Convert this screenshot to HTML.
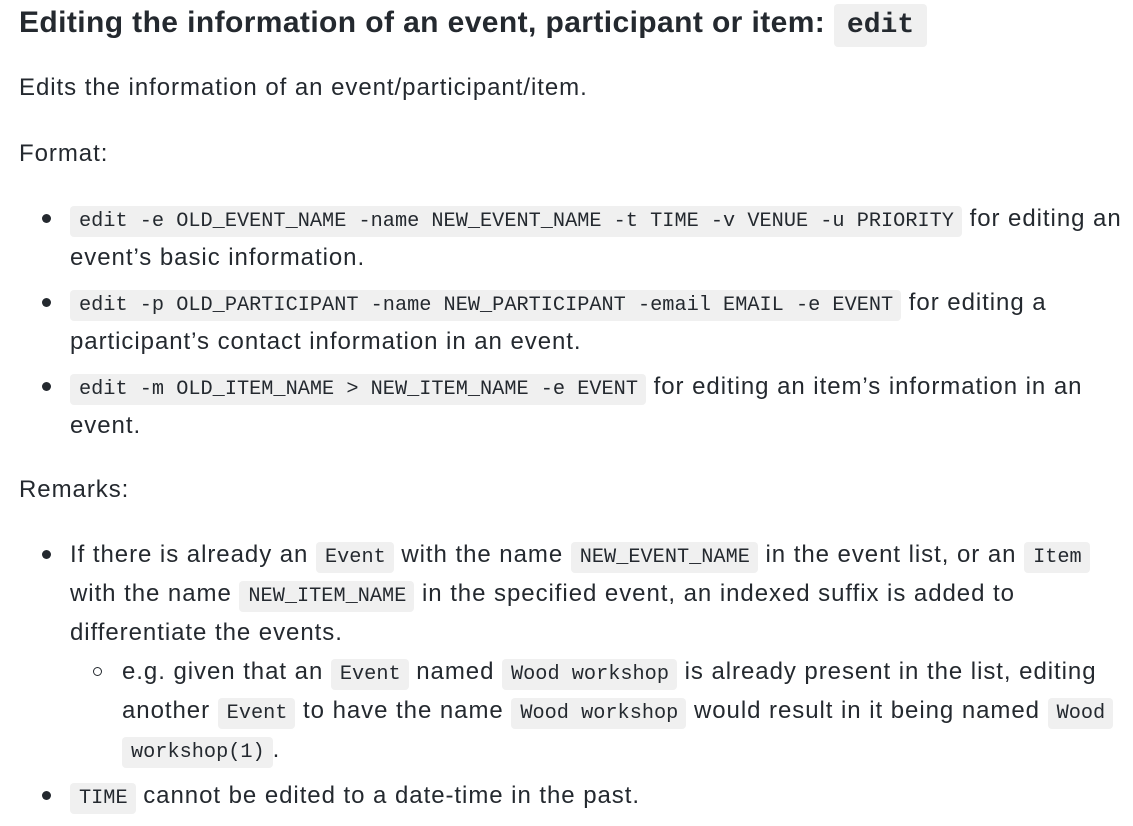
<!DOCTYPE html>
<html><head><meta charset="utf-8"><style>
html,body{margin:0;padding:0;background:#fff;width:1133px;height:826px;overflow:hidden}
body{font-family:"Liberation Sans",sans-serif;color:#24292f;font-size:24px;letter-spacing:0.95px;position:relative}
.l{position:absolute;height:39px;line-height:39px;white-space:nowrap}
code{font-family:"Liberation Mono",monospace;font-size:20.25px;letter-spacing:0;background:#f0f0f0;border-radius:4px;padding:4px 8px 4px 9px;color:#24292f}
.d{position:absolute;width:9px;height:9px;border-radius:50%;background:#24292f}
.c{position:absolute;width:7px;height:7px;border-radius:50%;border:1.5px solid #24292f}
h1{position:absolute;left:19px;top:0;margin:0;font-size:30px;letter-spacing:0.4px;font-weight:bold;line-height:46px;white-space:nowrap}
h1 code{font-size:28px;padding:6px 13px;font-weight:bold}
</style></head><body>
<h1>Editing the information of an event, participant or item: <code>edit</code></h1>
<div class="l" style="left:19px;top:68px">Edits the information of an event/participant/item.</div>
<div class="l" style="left:19px;top:134px">Format:</div>
<div class="d" style="left:42px;top:214px"></div>
<div class="l" style="left:70px;top:199px"><code>edit -e OLD_EVENT_NAME -name NEW_EVENT_NAME -t TIME -v VENUE -u PRIORITY</code> for editing an</div>
<div class="l" style="left:70px;top:238px">event’s basic information.</div>
<div class="d" style="left:42px;top:298px"></div>
<div class="l" style="left:70px;top:283px"><code>edit -p OLD_PARTICIPANT -name NEW_PARTICIPANT -email EMAIL -e EVENT</code> for editing a</div>
<div class="l" style="left:70px;top:322px">participant’s contact information in an event.</div>
<div class="d" style="left:42px;top:382px"></div>
<div class="l" style="left:70px;top:367px"><code>edit -m OLD_ITEM_NAME &gt; NEW_ITEM_NAME -e EVENT</code> for editing an item’s information in an</div>
<div class="l" style="left:70px;top:406px">event.</div>
<div class="l" style="left:19px;top:470px">Remarks:</div>
<div class="d" style="left:42px;top:550px"></div>
<div class="l" style="left:70px;top:535px">If there is already an <code>Event</code> with the name <code>NEW_EVENT_NAME</code> in the event list, or an <code>Item</code></div>
<div class="l" style="left:70px;top:574px">with the name <code>NEW_ITEM_NAME</code> in the specified event, an indexed suffix is added to</div>
<div class="l" style="left:70px;top:613px">differentiate the events.</div>
<div class="c" style="left:93px;top:667px"></div>
<div class="l" style="left:122px;top:652px">e.g. given that an <code>Event</code> named <code>Wood workshop</code> is already present in the list, editing</div>
<div class="l" style="left:122px;top:691px">another <code>Event</code> to have the name <code>Wood workshop</code> would result in it being named <code>Wood</code></div>
<div class="l" style="left:122px;top:730px"><code>workshop(1)</code>.</div>
<div class="d" style="left:42px;top:791px"></div>
<div class="l" style="left:70px;top:776px"><code>TIME</code> cannot be edited to a date-time in the past.</div>
</body></html>
